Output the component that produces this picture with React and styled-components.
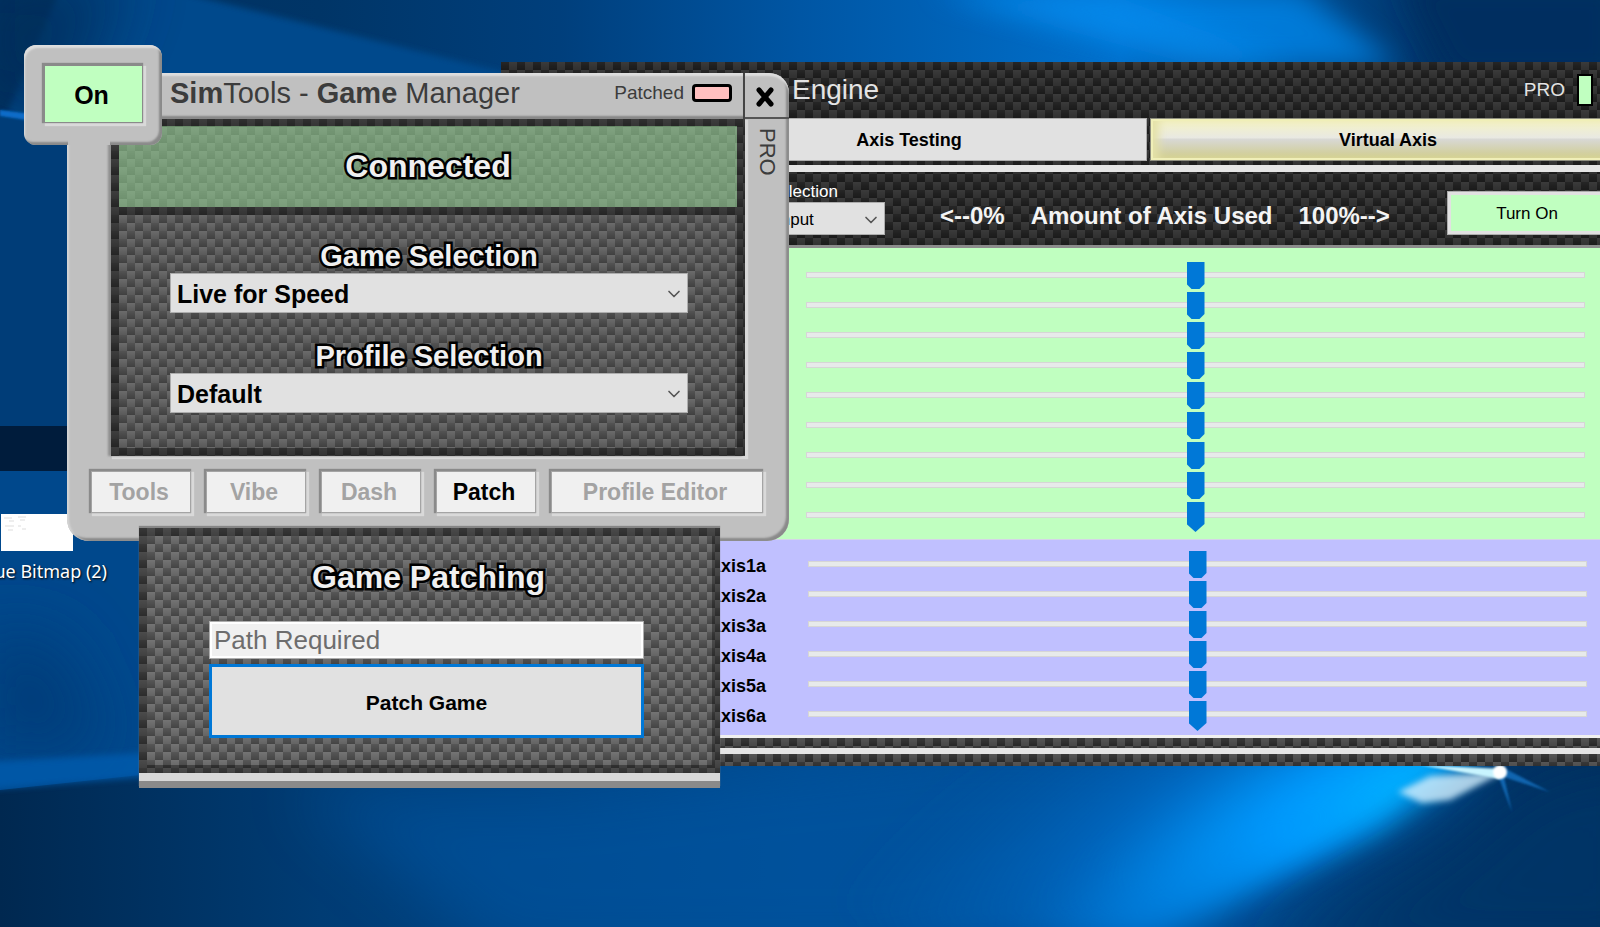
import React from 'react'
import styled, { createGlobalStyle, css } from 'styled-components'
import { ChevronDown } from 'lucide-react'

const GlobalStyle = createGlobalStyle`
  *, *::after { box-sizing: border-box; }
  body {
    margin: 0;
    font-family: "Liberation Sans", Arial, sans-serif;
    color: #000;
  }
  button, input, select { font-family: inherit; margin: 0; }
`

// woven carbon look: checkerboard plus a soft shine on each 8px cell
const carbon = (light, dark, shine) => css`
  background-color: ${dark};
  background-image:
    linear-gradient(rgba(255, 255, 255, ${shine}), rgba(255, 255, 255, 0)),
    repeating-conic-gradient(${light} 0 25%, ${dark} 0 50%);
  background-size: 8px 8px, 16px 16px;
`

const sunken = css`
  box-shadow: -1px -1px 1px 1px #8a8a8a, 2px 2px 1px 1px #d9d9d9;
`

const Desktop = styled.main`
  position: relative;
  min-height: 100vh;
  overflow: hidden;
  background: #004585;
`

const WallpaperSvg = styled.svg`
  position: absolute;
  inset: 0;
  width: 100%;
  height: 100%;
`

const Shortcut = styled.a`
  position: absolute;
  top: 514px;
  left: 0;
  width: 107px;
  color: #fff;
  font: 18px/26px "Noto Sans", "Open Sans", sans-serif;
  text-decoration: none;
  white-space: nowrap;
  text-shadow: 1px 1px 2px #000;
  span {
    display: flex;
    justify-content: flex-end;
  }
`

const Thumb = styled.svg`
  display: block;
  width: 72px;
  height: 37px;
  margin: 0 0 7px 1px;
  background: #fff;
`

/* ---- engine window ---- */

const EngineWindow = styled.section`
  position: absolute;
  top: 62px;
  left: 501px;
  right: -26px;
  ${carbon('#303030', '#1a1a1a', 0.05)}
`

const EngineHeader = styled.header`
  display: flex;
  align-items: center;
  height: 56px;
  padding: 0 33px 0 13px;
  color: #e4e4e4;
`

const Logo = styled.svg`
  width: 32px;
  height: 36px;
`

const EngineTitle = styled.h1`
  margin: 0 auto 0 246px;
  font-size: 28px;
  font-weight: 400;
  line-height: 32px;
`

const Edition = styled.span`
  margin-right: 12px;
  font-size: 19px;
`

const Led = styled.i`
  width: 16px;
  height: 32px;
  border: 2px solid #000;
  background: #c0ffc0;
`

const Tabs = styled.nav`
  display: flex;
  gap: 3px;
  padding: 0 0 4px 170px;
`

const Tab = styled.button`
  flex: 1;
  height: 43px;
  padding: 2px 0 0;
  border: 1px solid #adadad;
  background: #e1e1e1;
  font-size: 18px;
  font-weight: 700;
  ${p => p.$active && css`
    border-color: #8f8f80;
    background: linear-gradient(#f6f4c2, #e9e9e2 45%, #d8d8d4 50%, #d0cd92 92%);
    box-shadow: inset 0 0 0 2px #f0efb8, inset 8px 0 8px #e4e1a8;
  `}
`

const Rule = styled.hr`
  height: 7px;
  margin: 0;
  border: 0;
  background: #e5e5e5;
`

const Toolbar = styled.div`
  display: flex;
  align-items: flex-end;
  padding: 10px 19px 10px 263px;
  border-bottom: 3px solid #8c8c8c;
`

const SmallField = styled.div`
  width: 121px;
  label {
    display: block;
    padding-left: 4px;
    color: #fff;
    font-size: 17px;
    line-height: 20px;
  }
`

const Legend = styled.div`
  display: flex;
  gap: 26px;
  margin-left: 55px;
  color: #f4f4f4;
  font-size: 24px;
  font-weight: 700;
  line-height: 38px;
  white-space: pre;
`

const TurnOn = styled.button`
  width: 160px;
  height: 44px;
  margin-left: auto;
  padding: 2px 0 0;
  border: 1px solid #adadad;
  background: #c0ffc0;
  box-shadow: inset 0 0 0 3px #e1e1e1;
  font-size: 17px;
`

const AxisGroup = styled.div`
  display: grid;
  grid-auto-rows: 30px;
  padding: ${p => p.$virtual ? '11px 39px 4px 0' : '14px 41px 7px 305px'};
  background: ${p => p.$virtual ? '#c0c0ff' : '#c0ffc0'};
  ${p => p.$virtual && css`
    border-top: 1px solid #d5d5e8;
    border-bottom: 3px solid #f0f0f0;
  `}
`

const AxisRow = styled.div`
  display: flex;
  label {
    width: 265px;
    margin-right: 42px;
    font-size: 18px;
    font-weight: 700;
    line-height: 30px;
    text-align: right;
  }
`

const Slider = styled.input.attrs({ type: 'range', min: 0, max: 100 })`
  flex: 1;
  min-width: 0;
  height: 30px;
  appearance: none;
  background: none;
  &::-webkit-slider-runnable-track {
    height: 30px;
    background:
      linear-gradient(#e7eaea, #e7eaea) 1px 11px / calc(100% - 2px) 4px no-repeat,
      linear-gradient(#d6d6d6, #d6d6d6) 0 10px / 100% 6px no-repeat;
  }
  &::-webkit-slider-thumb {
    appearance: none;
    width: 18px;
    height: 30px;
    background: #0078d7;
    clip-path: ${p => p.$last
      ? 'polygon(0 0, 100% 0, 100% 22px, 50% 100%, 0 22px)'
      : 'polygon(0 0, 100% 0, 100% 22px, 13px 27px, 5px 27px, 0 22px)'};
  }
`

const EngineFooter = styled.footer`
  padding: 10px 0 12px;
  ${carbon('#484848', '#282828', 0.08)}
  hr { height: 6px; }
`

/* ---- game manager window ---- */

const Manager = styled.section`
  position: absolute;
  top: 73px;
  left: 67px;
  width: 722px;
`

const Frame = styled.div`
  border-radius: 0 20px 22px 22px;
  background: #c0c0c0;
  box-shadow: inset 0 4px 2px -1px #dedede, inset 3px 0 2px -1px #d4d4d4,
    inset -3px -3px 2px #8a8a8a;
`

const TitleBar = styled.header`
  display: flex;
  height: 46px;
`

const TitleText = styled.div`
  display: flex;
  flex: 1;
  align-items: center;
  padding: 0 11px 7px 103px;
  border-right: 2px solid #444;
  box-shadow: inset 0 -4px 2px -1px #868686;
  color: #3c3c3c;
`

const ManagerTitle = styled.h1`
  margin: 0 auto 0 0;
  font-size: 29px;
  font-weight: 400;
  line-height: 34px;
`

const PatchState = styled.span`
  display: flex;
  align-items: center;
  gap: 8px;
  font-size: 19px;
  &::after {
    content: "";
    width: 40px;
    height: 18px;
    border: 3px solid #000;
    border-radius: 4px;
    background: #ffc0c0;
  }
`

const Close = styled.button`
  display: grid;
  place-items: center;
  width: 44px;
  padding: 3px 4px 0 0;
  border: 0;
  border-bottom: 2px solid #555;
  background: none;
`

const Middle = styled.div`
  display: flex;
  padding-left: 44px;
`

const Screen = styled.div`
  position: relative;
  flex: 1;
  padding: 7px 8px 8px;
  ${carbon('#5a5a5a', '#404040', 0.1)}
  box-shadow: inset 0 0 0 8px rgba(0, 0, 0, 0.42), -3px 0 2px #8f8f8f,
    2px 2px 1px 1px #d8d8d8;
`

const Side = styled.div`
  display: flex;
  align-items: flex-end;
  width: 44px;
  padding: 9px 0 0 11px;
  color: #3c3c3c;
  font-size: 22px;
  line-height: 22px;
  writing-mode: vertical-rl;
`

const outlined = css`
  margin: 0;
  color: #f0f0f0;
  text-align: center;
  -webkit-text-stroke: 5px #000;
  paint-order: stroke fill;
`

const Banner = styled.h2`
  ${outlined}
  border-bottom: 8px solid rgba(0, 0, 0, 0.42);
  background: rgba(144, 200, 144, 0.6);
  background-clip: padding-box;
  font-size: 32px;
  line-height: 81px;
`

const Choices = styled.div`
  padding: 24px 49px 35px 51px;
`

const ChoiceLabel = styled.label`
  ${outlined}
  display: block;
  font-size: 29px;
  font-weight: 700;
  line-height: 34px;
`

const SelectBox = styled.span`
  display: block;
  position: relative;
  & + ${ChoiceLabel} { margin-top: 26px; }
  svg {
    position: absolute;
    top: 50%;
    right: 4px;
    margin-top: -9px;
    color: #555;
    pointer-events: none;
  }
`

const SelectInput = styled.select`
  display: block;
  appearance: none;
  width: 100%;
  height: ${p => p.$small ? 33 : 40}px;
  padding: 1px 24px 0 ${p => p.$small ? 11 : 6}px;
  border: 1px solid #adadad;
  border-radius: 0;
  background: #e1e1e1;
  color: #000;
  font-size: ${p => p.$small ? 17 : 25}px;
  font-weight: ${p => p.$small ? 400 : 700};
`

const Actions = styled.div`
  display: flex;
  gap: 15px;
  padding: 15px 26px 28px 24px;
`

const Action = styled.button`
  flex: ${p => p.$wide ? '1' : '0 0 100px'};
  height: 42px;
  padding: 0 4px 0 0;
  border: 1px solid #a4a4a4;
  background: #f0f0f0;
  color: #000;
  font-size: 23px;
  font-weight: 700;
  ${sunken}
  &:disabled { color: #a3a3a3; }
`

const PowerFrame = styled.div`
  position: absolute;
  top: -28px;
  left: -43px;
  padding: 20px 19px 22px 20px;
  border-radius: 12px;
  background: #c0c0c0;
  box-shadow: inset 2px 4px 2px -1px #dedede, inset -3px -3px 2px #8a8a8a;
`

// carries the left column up into the power frame without a seam
const PowerNeck = styled.i`
  position: absolute;
  left: 44px;
  bottom: 0;
  width: 42px;
  height: 5px;
  background: #c0c0c0;
`

const Power = styled.button`
  display: block;
  width: 99px;
  height: 58px;
  padding: 2px 4px 0 0;
  border: 1px solid #8a8a8a;
  background: #c0ffc0;
  font-size: 25px;
  font-weight: 700;
  ${sunken}
`

const Drawer = styled.div`
  position: relative;
  margin: -13px 69px 0 72px;
  border-bottom: 7px solid #8a8a8a;
  box-shadow: 0 -2px 1px #868686;
`

const DrawerBody = styled.form`
  padding: 31px 76px 35px 70px;
  ${carbon('#646464', '#444444', 0.1)}
  box-shadow: inset 0 0 0 8px rgba(0, 0, 0, 0.35);
`

const DrawerLip = styled.div`
  height: 8px;
  background: #d8d8d8;
`

const DrawerTitle = styled.h2`
  ${outlined}
  padding-left: 4px;
  font-size: 32px;
  line-height: 36px;
`

const PathInput = styled.input`
  display: block;
  width: 100%;
  height: 38px;
  margin: 26px 0 5px;
  padding: 0 4px;
  border: 1px solid #adadad;
  border-radius: 0;
  outline: 0;
  background: #f0f0f0;
  box-shadow: inset 0 0 0 2px #fff;
  font-size: 26px;
  &::placeholder { color: #6d6d6d; opacity: 1; }
`

const PatchButton = styled.button`
  display: block;
  width: 100%;
  height: 74px;
  padding: 3px 0 0;
  border: 3px solid #0078d7;
  background: #e1e1e1;
  color: #000;
  font-size: 21px;
  font-weight: 700;
`

const Wallpaper = () => (
  <WallpaperSvg viewBox="0 0 1600 927" preserveAspectRatio="none" aria-hidden="true">
    <defs>
      <linearGradient id="sky" x1="0" x2="1" y1="0" y2="0">
        <stop offset="0" stopColor="#00305f" />
        <stop offset=".2" stopColor="#003567" />
        <stop offset=".35" stopColor="#003f7c" />
        <stop offset=".5" stopColor="#0056a4" />
        <stop offset=".7" stopColor="#0070cc" />
        <stop offset=".9" stopColor="#003265" />
        <stop offset="1" stopColor="#002f60" />
      </linearGradient>
      <radialGradient id="glow" gradientUnits="userSpaceOnUse" cx="1400" cy="790" r="620" gradientTransform="translate(1400 790) rotate(-20) scale(1 .34) translate(-1400 -790)">
        <stop offset="0" stopColor="#00b8ff" />
        <stop offset=".22" stopColor="#0098fa" />
        <stop offset=".55" stopColor="#006cc8" stopOpacity=".7" />
        <stop offset="1" stopColor="#0058a8" stopOpacity="0" />
      </radialGradient>
      <linearGradient id="floor" x1="0" x2="1" y1="0" y2="0">
        <stop offset="0" stopColor="#002850" />
        <stop offset=".2" stopColor="#003c74" />
        <stop offset=".5" stopColor="#004b90" />
        <stop offset=".75" stopColor="#004c92" />
        <stop offset="1" stopColor="#002c58" />
      </linearGradient>
      <filter id="wide" x="-40%" y="-60%" width="180%" height="220%"><feGaussianBlur stdDeviation="32" /></filter>
      <filter id="soft" x="-20%" y="-20%" width="140%" height="140%"><feGaussianBlur stdDeviation="14" /></filter>
      <filter id="edge" x="-20%" y="-20%" width="140%" height="140%"><feGaussianBlur stdDeviation="3" /></filter>
      <filter id="fine" x="-50%" y="-50%" width="200%" height="200%"><feGaussianBlur stdDeviation="1" /></filter>
    </defs>
    <rect width="1600" height="927" fill="url(#sky)" />
    <path d="M60 -10H170L560 86V130H0Z" fill="#004a8c" filter="url(#edge)" />
    <path d="M-30 -30H130L60 130L-30 100Z" fill="#002f5c" opacity=".8" filter="url(#wide)" />
    <path d="M930 -10L1230 66H1400L1300 -10Z" fill="#0085e8" opacity=".8" filter="url(#soft)" />
    <path d="M950 -2L1190 64H1290L1120 -2Z" fill="#0b93f5" opacity=".4" filter="url(#soft)" />
    <path d="M1400 -20H1620V80H1450Z" fill="#002f60" filter="url(#soft)" />
    <path d="M0 110L80 118V430H0Z" fill="#003d78" />
    <path d="M0 110L80 120V128L0 116Z" fill="#0a6cc8" filter="url(#fine)" />
    <rect y="426" width="80" height="46" fill="#001c3c" />
    <path d="M-10 471H160V800H-10Z" fill="#00488c" />
    <path d="M-20 630L60 640L110 750L-20 760Z" fill="#003e7a" filter="url(#wide)" />
    <path d="M0 790L140 775L720 730H1600V927H0Z" fill="url(#floor)" />
    <path d="M-20 762L160 752V776L-20 790Z" fill="#005cae" opacity=".8" filter="url(#edge)" />
    <path d="M300 788L560 788L1000 740L1500 766L900 960H500Z" fill="#0058a8" opacity=".5" filter="url(#wide)" />
    <path d="M700 740H1500L1380 830L1150 940H900L700 800Z" fill="url(#glow)" filter="url(#soft)" />
    <path d="M1500 772L1350 830L1130 950H1040L1270 790Z" fill="#0098ff" opacity=".5" filter="url(#wide)" />
    <path d="M1530 772L1440 850L1260 960H1660V740Z" fill="#003468" opacity=".9" filter="url(#wide)" />
    <path d="M1504 772L1450 800L1422 803L1398 792L1430 776Z" fill="#d5f1ff" opacity=".8" filter="url(#edge)" />
    <path d="M1420 765L1502 769V776L1500 779Z" fill="#c8f4ff" filter="url(#fine)" />
    <path d="M1500 766L1550 792L1504 777L1512 812L1499 778Z" fill="#1b86e0" opacity=".6" filter="url(#fine)" />
    <circle cx="1500" cy="772" r="7" fill="#fff" filter="url(#fine)" />
  </WallpaperSvg>
)

const greenAxes = ['Axis 1', 'Axis 2', 'Axis 3', 'Axis 4', 'Axis 5', 'Axis 6', 'Axis 7', 'Axis 8', 'Axis 9']
const virtualAxes = ['Axis1a', 'Axis2a', 'Axis3a', 'Axis4a', 'Axis5a', 'Axis6a']

const Engine = () => (
  <EngineWindow>
    <EngineHeader>
      <Logo viewBox="0 0 32 36" aria-hidden="true">
        <path d="M3 1h8v34H3zM23 1h8v34h-8z" fill="#d98a1c" />
        <path d="M13 1h8v34h-8z" fill="#c8c8c8" />
      </Logo>
      <EngineTitle>Engine</EngineTitle>
      <Edition>PRO</Edition>
      <Led />
    </EngineHeader>
    <Tabs>
      <Tab>Axis Testing</Tab>
      <Tab $active>Virtual Axis</Tab>
    </Tabs>
    <Rule />
    <Toolbar>
      <SmallField>
        <label htmlFor="input">Selection</label>
        <SelectBox>
          <SelectInput id="input" $small>
            <option>Input</option>
          </SelectInput>
          <ChevronDown size={20} strokeWidth={2} />
        </SelectBox>
      </SmallField>
      <Legend>
        <span>{'<--0%'}</span>
        <span>Amount of Axis Used</span>
        <span>{'100%-->'}</span>
      </Legend>
      <TurnOn>Turn On</TurnOn>
    </Toolbar>
    <AxisGroup>
      {greenAxes.map((name, i) => (
        <AxisRow key={name}>
          <Slider aria-label={name} defaultValue={50} $last={i === greenAxes.length - 1} />
        </AxisRow>
      ))}
    </AxisGroup>
    <AxisGroup $virtual>
      {virtualAxes.map((name, i) => (
        <AxisRow key={name}>
          <label htmlFor={name}>{name}</label>
          <Slider id={name} defaultValue={50} $last={i === virtualAxes.length - 1} />
        </AxisRow>
      ))}
    </AxisGroup>
    <EngineFooter>
      <Rule />
    </EngineFooter>
  </EngineWindow>
)

function Choice({ id, label, value }) {
  return (
    <>
      <ChoiceLabel htmlFor={id}>{label}</ChoiceLabel>
      <SelectBox>
        <SelectInput id={id}>
          <option>{value}</option>
        </SelectInput>
        <ChevronDown size={20} strokeWidth={2} />
      </SelectBox>
    </>
  )
}

const GameManager = () => (
  <Manager>
    <Frame>
      <TitleBar>
        <TitleText>
          <ManagerTitle><b>Sim</b>Tools - <b>Game</b> Manager</ManagerTitle>
          <PatchState>Patched</PatchState>
        </TitleText>
        <Close aria-label="Close">
          <svg width="20" height="22" viewBox="0 0 20 22">
            <path d="M4 4L16 18M16 4L4 18" stroke="#000" strokeWidth="5" strokeLinecap="round" />
          </svg>
        </Close>
      </TitleBar>
      <Middle>
        <Screen>
          <Banner>Connected</Banner>
          <Choices>
            <Choice id="game" label="Game Selection" value="Live for Speed" />
            <Choice id="profile" label="Profile Selection" value="Default" />
          </Choices>
        </Screen>
        <Side>PRO</Side>
      </Middle>
      <Actions>
        <Action disabled>Tools</Action>
        <Action disabled>Vibe</Action>
        <Action disabled>Dash</Action>
        <Action>Patch</Action>
        <Action disabled $wide>Profile Editor</Action>
      </Actions>
    </Frame>
    <PowerFrame>
      <Power>On</Power>
      <PowerNeck />
    </PowerFrame>
    <Drawer>
      <DrawerBody>
        <DrawerTitle>Game Patching</DrawerTitle>
        <PathInput aria-label="Game path" placeholder="Path Required" />
        <PatchButton type="button">Patch Game</PatchButton>
      </DrawerBody>
      <DrawerLip />
    </Drawer>
  </Manager>
)

const App = () => (
  <Desktop>
    <GlobalStyle />
    <Wallpaper />
    <Shortcut href="#">
      <Thumb viewBox="0 0 72 37" aria-hidden="true">
        <path d="M3 4h8M8 7h5M17 3h8M19 6h5M4 12h9M7 16h5M17 12h3M21 15h4" stroke="#ddd" />
      </Thumb>
      <span>ue Bitmap (2)</span>
    </Shortcut>
    <Engine />
    <GameManager />
  </Desktop>
)

export default App
